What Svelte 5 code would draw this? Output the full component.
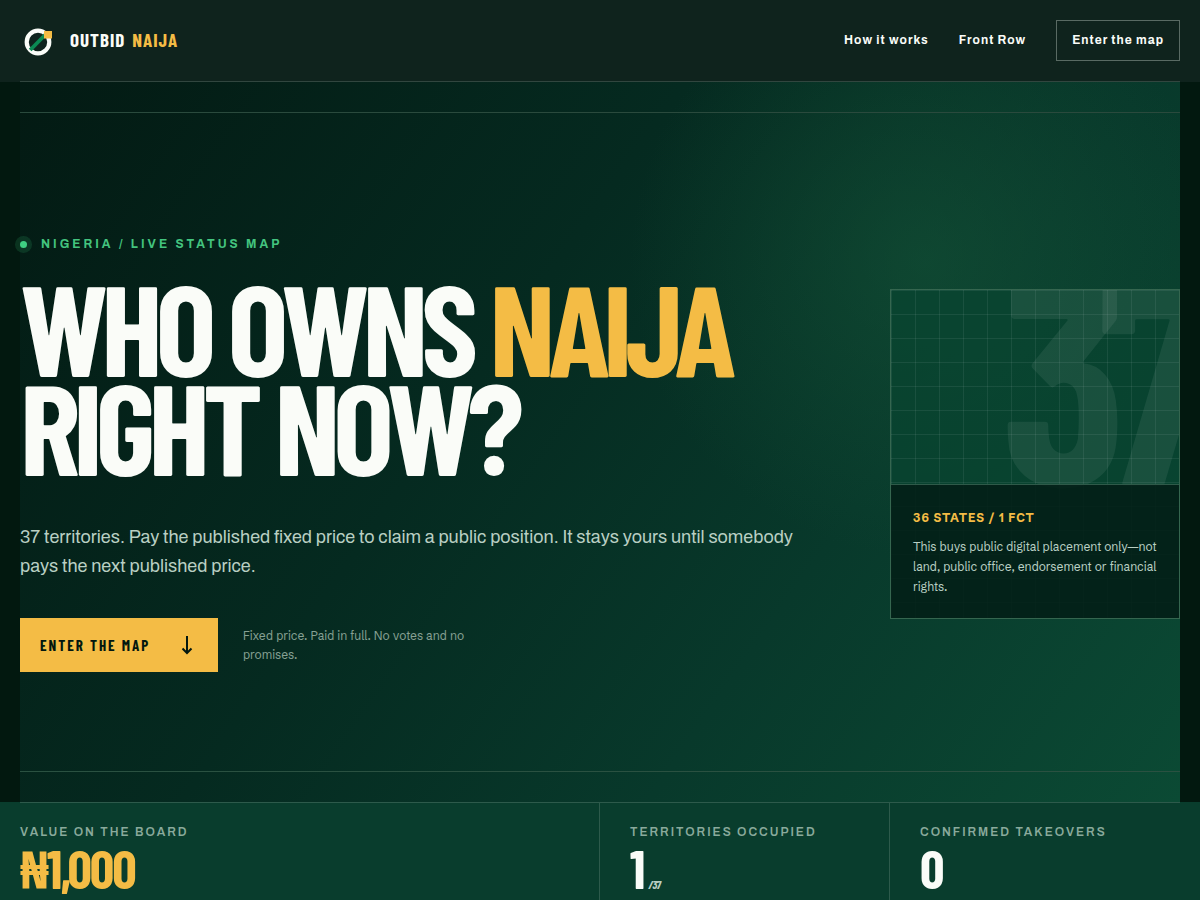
<script>
  const stats = [
    { label: 'Value on the board', value: '₦1,000', gold: true },
    { label: 'Territories occupied', value: '1', total: '/37' },
    { label: 'Confirmed takeovers', value: '0' }
  ];
</script>

<header class="site-header">
  <div class="wrap bar">
    <a class="brand" href="#top">
      <svg width="36" height="36" viewBox="0 0 36 36" aria-hidden="true">
        <circle cx="18" cy="19" r="11.3" fill="none" stroke="#fafcf8" stroke-width="4.2" />
        <path d="M10.2 27 26 11" stroke="#0b8a53" stroke-width="3.8" />
        <rect x="24" y="8" width="8" height="7.5" fill="#f4bc45" />
      </svg>
      <span class="brand-name">Outbid <span class="gold">Naija</span></span>
    </a>
    <nav>
      <a href="#how">How it works</a>
      <a href="#front">Front Row</a>
      <a class="outlined" href="#map">Enter the map</a>
    </nav>
  </div>
</header>

<main id="top">
  <section class="wrap hero">
    <div class="inner">
      <div class="copy">
        <p class="eyebrow"><span class="dot"></span>Nigeria / Live status map</p>
        <h1>Who owns <span class="gold">Naija</span><br />right now?</h1>
        <p class="lede">
          37 territories. Pay the published fixed price to claim a public position. It stays yours
          until somebody pays the next published price.
        </p>
        <div class="actions">
          <a class="cta" href="#map">
            Enter the map
            <svg width="14" height="20" viewBox="0 0 14 20" aria-hidden="true">
              <path d="M7 1v17M2.5 13.5 7 18l4.5-4.5" fill="none" stroke="currentColor" stroke-width="2" />
            </svg>
          </a>
          <p class="note">Fixed price. Paid in full. No votes and no promises.</p>
        </div>
      </div>
      <aside class="card">
        <span class="numeral" aria-hidden="true">37</span>
        <div class="panel">
          <strong>36 states / 1 FCT</strong>
          <p>This buys public digital placement only—not land, public office, endorsement or financial rights.</p>
        </div>
      </aside>
    </div>
  </section>

  <section class="stats">
    <dl class="wrap">
      {#each stats as s}
        <div class="stat">
          <dt>{s.label}</dt>
          <dd class:gold={s.gold}>{s.value}{#if s.total}<small>{s.total}</small>{/if}</dd>
        </div>
      {/each}
    </dl>
  </section>
</main>

<style>
  :global(body) {
    margin: 0;
    background: #02180f;
    color: #fafcf8;
    font-family: Archivo, 'Liberation Sans', sans-serif;
  }
  * { box-sizing: border-box; }
  a { color: inherit; text-decoration: none; }
  p, h1, dl, dd { margin: 0; }
  .gold { color: #f4bc45; }
  .wrap { margin: 0 20px; }
  .site-header { background: #0f231d; }
  .bar {
    display: flex;
    align-items: center;
    justify-content: space-between;
    height: 82px;
    border-bottom: 1px solid #31463f;
  }
  .brand { display: flex; align-items: center; gap: 14px; }
  .brand svg { display: block; }
  .brand-name {
    display: flex;
    gap: 7px;
    padding-bottom: 2px;
    font: 700 19px/24px 'Barlow Condensed', sans-serif;
    letter-spacing: 1px;
    text-transform: uppercase;
  }
  .note, .panel { font-family: 'Schibsted Grotesk', Archivo, sans-serif; }
  nav {
    display: flex;
    align-items: center;
    gap: 30px;
    font-size: 12px;
    font-weight: 700;
    line-height: 15px;
    letter-spacing: 1px;
  }
  .outlined { border: 1px solid #596a63; padding: 12px 15px; }
  .hero {
    background:
      radial-gradient(circle at 78% 25%, rgba(24, 92, 60, 0.45), transparent 28%),
      linear-gradient(125deg, #031a13 0%, #052a20 40%, #08392b 68%, #0b4a34 100%);
    padding: 30px 0;
  }
  .inner {
    min-height: 660px;
    border-top: 1px solid #2a4a3d;
    border-bottom: 1px solid #2a5141;
    display: grid;
    grid-template-columns: minmax(0, 1fr) 290px;
    gap: 80px;
    align-items: center;
  }
  .copy { padding-top: 24px; }
  .eyebrow {
    display: flex;
    align-items: center;
    gap: 14px;
    color: #43c47f;
    font-size: 12px;
    font-weight: 700;
    line-height: 16px;
    letter-spacing: 3px;
    text-transform: uppercase;
  }
  .dot {
    width: 7px;
    height: 7px;
    border-radius: 50%;
    background: #3fcf82;
    box-shadow: 0 0 0 5px rgba(63, 207, 130, 0.15);
  }
  h1 {
    margin-top: 25px;
    font: 700 128px/99px 'Barlow Condensed', sans-serif;
    letter-spacing: -7px;
    text-transform: uppercase;
  }
  .lede {
    margin-top: 48px;
    font-size: 18px;
    line-height: 29px;
    color: #b9cfc3;
  }
  .actions { display: flex; align-items: center; gap: 25px; margin-top: 37px; }
  .cta {
    display: flex;
    align-items: center;
    justify-content: space-between;
    width: 198px;
    height: 54px;
    padding: 0 24px 0 20px;
    background: #f4bc45;
    color: #03170f;
    font: 700 15px/20px 'Barlow Condensed', sans-serif;
    letter-spacing: 2px;
    text-transform: uppercase;
  }
  .note { width: 240px; font-size: 12px; line-height: 19px; color: #86a093; }
  .card {
    position: relative;
    overflow: hidden;
    display: flex;
    flex-direction: column;
    justify-content: flex-end;
    min-height: 330px;
    margin-top: 24px;
    border: 1px solid #35664f;
    background:
      linear-gradient(rgba(255, 255, 255, 0.07) 1px, transparent 1px) 0 0 / 24px 24px,
      linear-gradient(90deg, rgba(255, 255, 255, 0.07) 1px, transparent 1px) 0 0 / 24px 24px,
      rgba(8, 68, 48, 0.75);
  }
  .numeral {
    position: absolute;
    left: 110px;
    top: -63px;
    font: 700 288px/288px 'Barlow Condensed', sans-serif;
    letter-spacing: -28px;
    color: rgba(255, 255, 255, 0.07);
  }
  .panel {
    position: relative;
    padding: 24px 20px 21px 22px;
    border-top: 1px solid #2f5a49;
    background: rgba(3, 31, 23, 0.9);
  }
  .panel strong {
    display: block;
    font-size: 12px;
    line-height: 18px;
    letter-spacing: 1px;
    text-transform: uppercase;
    color: #f4bc45;
  }
  .panel p { margin-top: 10px; font-size: 12px; line-height: 20px; color: #b9cfc3; }
  .stats { background: #093d2d; }
  .stats dl {
    display: grid;
    grid-template-columns: 2fr 1fr 1fr;
    border-top: 1px solid #2d5a4b;
  }
  .stat { padding: 20px 0 14px 30px; border-right: 1px solid #2d5a4b; }
  .stat:first-child { padding-left: 0; }
  .stat:last-child { border-right: 0; }
  dt {
    font-size: 12px;
    font-weight: 600;
    line-height: 18px;
    letter-spacing: 2px;
    text-transform: uppercase;
    color: #8aaa9c;
  }
  dd {
    font: 700 54px/54px 'Barlow Condensed', 'Fira Sans Extra Condensed', sans-serif;
    letter-spacing: -2px;
  }
  small { font-size: 12px; font-style: italic; margin-left: 5px; letter-spacing: -1px; color: #b9cfc3; }
</style>
